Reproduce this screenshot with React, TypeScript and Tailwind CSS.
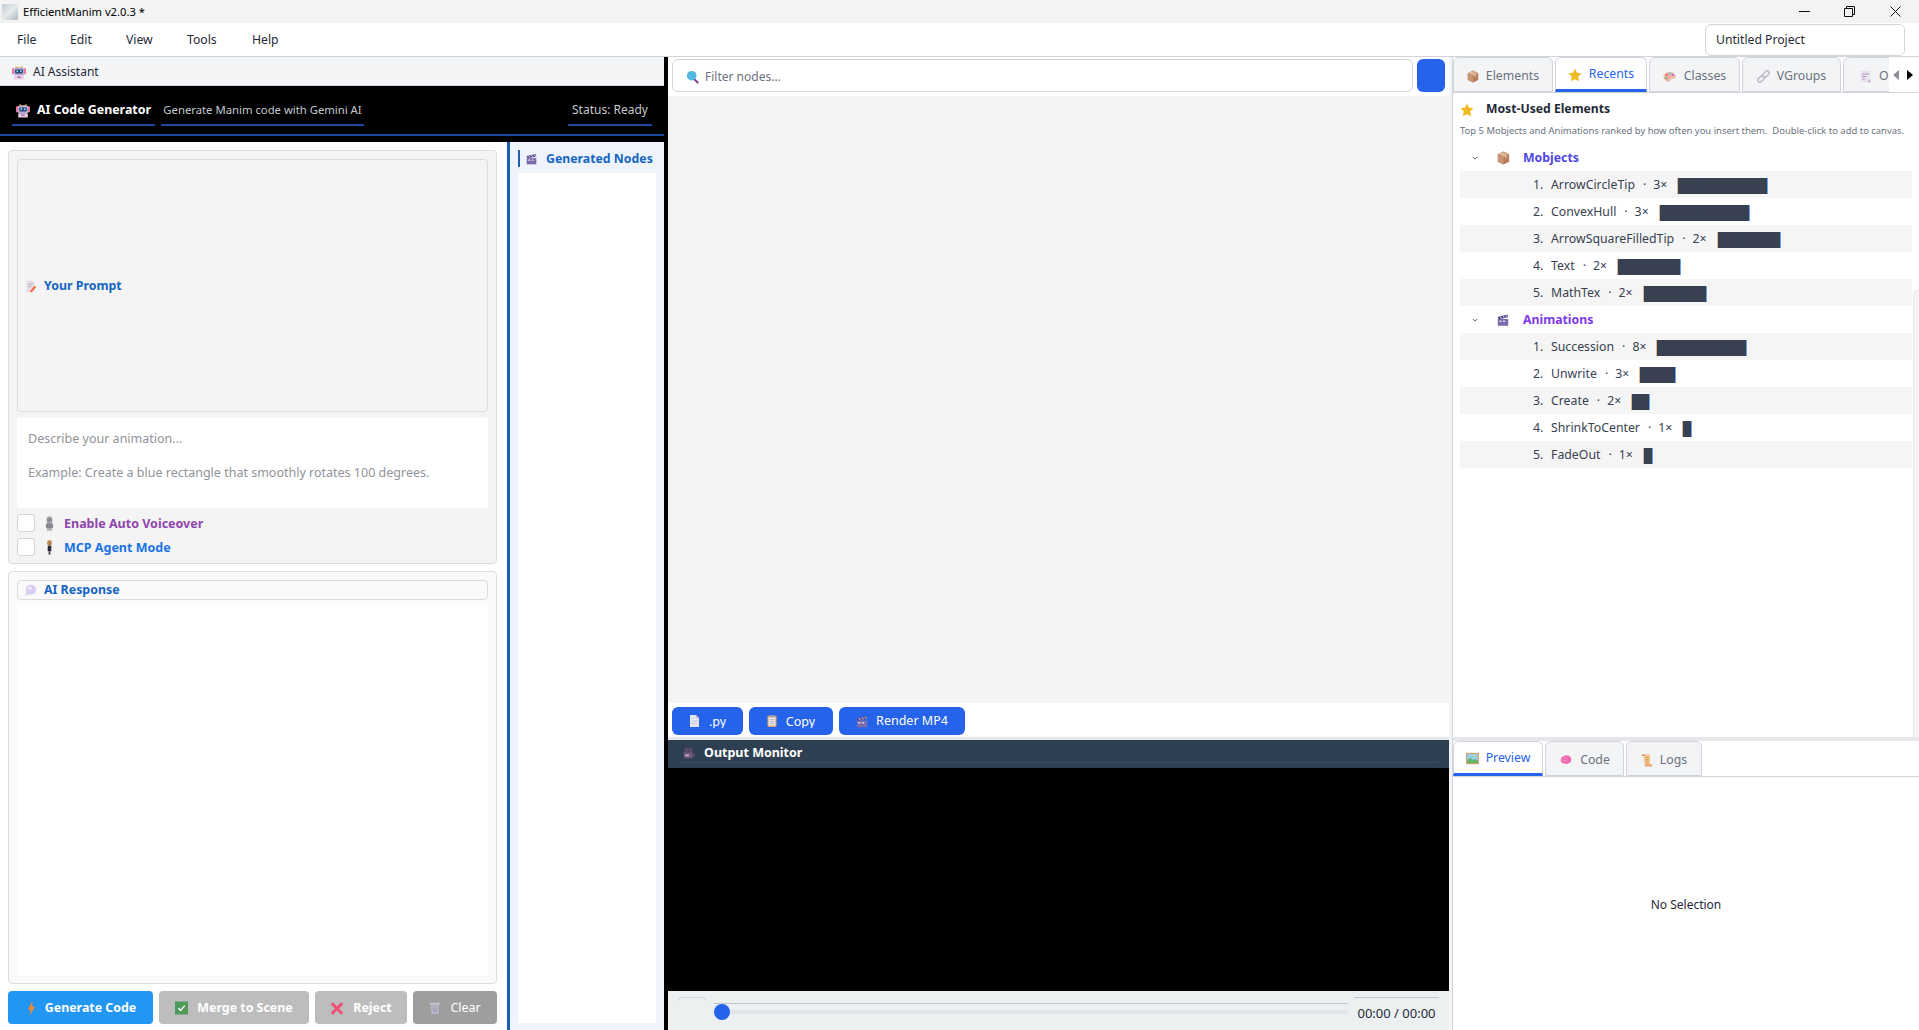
import React from "react";

type IconProps = { className?: string };

// emoji-like icons, the reference shows Windows emoji here
const Robot = ({ className }: IconProps) => (
  <svg viewBox="0 0 16 16" className={className}>
    <rect x="0" y="3" width="3" height="7" rx="1" fill="#ef6f95" />
    <rect x="13" y="3" width="3" height="7" rx="1" fill="#ef6f95" />
    <path d="M4 0l2 2h4l2-2v3H4z" fill="#e8b23a" />
    <rect x="2" y="2.500" width="12" height="8.500" rx="1.500" fill="#b5aee0" />
    <rect x="3.500" y="4.500" width="9" height="4.500" rx="1.500" fill="#2c3a66" />
    <rect x="5" y="5.500" width="2" height="2.200" fill="#7ad6f7" />
    <rect x="9" y="5.500" width="2" height="2.200" fill="#7ad6f7" />
    <rect x="2.500" y="11" width="11" height="5" rx="1" fill="#efcbe2" />
    <rect x="6" y="12.500" width="4" height="1.500" fill="#7a6ea8" />
  </svg>
);
const Memo = ({ className }: IconProps) => (
  <svg viewBox="0 0 16 16" className={className}>
    <path d="M3 1h7l3 3v11H3z" fill="#e6dce6" />
    <path d="M5 5h6M5 8h4" stroke="#b9a7b9" strokeWidth="1" />
    <path d="M7 14l6-7 2 2-6 6z" fill="#f4683c" />
  </svg>
);
const Clapper = ({ className }: IconProps) => (
  <svg viewBox="0 0 16 16" className={className}>
    <rect x="1" y="6" width="14" height="9" fill="#7c6bab" />
    <path d="M1 3l13-3 1 3.500L2 6.500z" fill="#5b4d8c" />
    <path d="M4 2.500l2 3M8 1.500l2 3M12 .8l2 3" stroke="#d8d2ee" strokeWidth="1.2" />
    <rect x="3" y="8" width="3" height="2" fill="#d8d2ee" />
    <rect x="8" y="8" width="3" height="2" fill="#d8d2ee" />
  </svg>
);
const Balloon = ({ className }: IconProps) => (
  <svg viewBox="0 0 16 16" className={className}>
    <ellipse cx="8.500" cy="7" rx="6.500" ry="6" fill="#d9cdf2" />
    <path d="M3 10l-2 5 5-2.500z" fill="#d9cdf2" />
    <ellipse cx="7" cy="5" rx="3" ry="2" fill="#efe9fb" />
  </svg>
);
const StudioMic = ({ className }: IconProps) => (
  <svg viewBox="0 0 10 16" className={className}>
    <rect x="2" y="0" width="6" height="9" rx="3" fill="#a7a2ac" />
    <path d="M2 3h6M2 5h6" stroke="#74707c" strokeWidth=".8" />
    <rect x="1" y="8" width="8" height="5" rx="1" fill="#8a858f" />
    <rect x="2" y="13" width="6" height="3" fill="#b5b1ba" />
  </svg>
);
const Mic = ({ className }: IconProps) => (
  <svg viewBox="0 0 10 16" className={className}>
    <rect x="2.500" y="0" width="5" height="6" rx="2" fill="#b9864e" />
    <rect x="3" y="6" width="4" height="6" fill="#2f2a3a" />
    <rect x="4" y="12" width="2" height="4" fill="#4a4556" />
  </svg>
);
const Bolt = ({ className }: IconProps) => (
  <svg viewBox="0 0 10 16" className={className}>
    <path d="M6 0L1 9h3l-1 7 6-10H6z" fill="#f28a30" />
  </svg>
);
const CheckBox = ({ className }: IconProps) => (
  <svg viewBox="0 0 16 16" className={className}>
    <rect width="16" height="16" fill="#4f9a5b" />
    <path d="M4 8l3 3 5-6" stroke="#fff" strokeWidth="1.6" fill="none" />
  </svg>
);
const Cross = ({ className }: IconProps) => (
  <svg viewBox="0 0 16 16" className={className}>
    <path d="M2 2l12 12M14 2L2 14" stroke="#ef4f72" strokeWidth="3.4" />
  </svg>
);
const Trash = ({ className }: IconProps) => (
  <svg viewBox="0 0 16 16" className={className}>
    <rect x="1" y="1" width="14" height="2" fill="#c9c5d6" />
    <path d="M2.500 3h11l-1 13h-9z" fill="#bdb8cc" />
    <path d="M5 5l1 9M8 5v9M11 5l-1 9" stroke="#8f8aa0" strokeWidth=".8" />
  </svg>
);
const Magnifier = ({ className }: IconProps) => (
  <svg viewBox="0 0 16 16" className={className}>
    <path d="M9 10l5 5" stroke="#7a3f95" strokeWidth="2.4" />
    <circle cx="6.500" cy="6.500" r="5.500" fill="#4fb9df" />
  </svg>
);
const Box = ({ className }: IconProps) => (
  <svg viewBox="0 0 16 16" className={className}>
    <path d="M8 0l7 3.500v9L8 16l-7-3.500v-9z" fill="#b97f5b" />
    <path d="M8 0l7 3.500L8 7 1 3.500z" fill="#d5a685" />
    <path d="M8 7v9L1 12.500v-9z" fill="#c89673" />
    <path d="M4 1.800l7 3.500v3" stroke="#eed4bd" strokeWidth="1.2" fill="none" />
  </svg>
);
const Star = ({ className }: IconProps) => (
  <svg viewBox="0 0 16 16" className={className}>
    <path d="M8 .5l2.300 4.900 5.200.7-3.800 3.700 1 5.400L8 12.800l-4.700 2.400 1-5.400L.5 6.100l5.200-.7z" fill="#efb91f" />
  </svg>
);
const Palette = ({ className }: IconProps) => (
  <svg viewBox="0 0 16 16" className={className}>
    <path d="M8 2C3.500 2 0 5 0 8.500S3.500 14 7 14c2 0 1-2 2-3s5 1 6-2-3-7-7-7z" fill="#f3b5a6" />
    <circle cx="4" cy="6" r="1.300" fill="#ef5b6d" />
    <circle cx="8" cy="4.500" r="1.300" fill="#5bc4e8" />
    <circle cx="3.500" cy="10" r="1.300" fill="#5cb85c" />
    <circle cx="11.500" cy="6" r="1.300" fill="#b06fd8" />
  </svg>
);
const Link = ({ className }: IconProps) => (
  <svg viewBox="0 0 16 16" className={className}>
    <g fill="none" stroke="#c3bccb" strokeWidth="2">
      <rect x="8.500" y="0.500" width="5" height="9" rx="2.500" transform="rotate(45 11 5)" />
      <rect x="2.500" y="6.500" width="5" height="9" rx="2.500" transform="rotate(45 5 11)" />
    </g>
  </svg>
);
const Page = ({ className }: IconProps) => (
  <svg viewBox="0 0 16 16" className={className}>
    <rect x="2" y="1" width="12" height="14" fill="#e9e1ee" />
    <path d="M4 5h8M4 8h5M4 11h3" stroke="#a894b5" strokeWidth="1.2" />
    <path d="M10 15l4-4v4z" fill="#c9a8d9" />
  </svg>
);
const FileIcon = ({ className }: IconProps) => (
  <svg viewBox="0 0 12 16" className={className}>
    <path d="M0 0h8l4 4v12H0z" fill="#e5e3ee" />
    <path d="M8 0l4 4H8z" fill="#b9b5c9" />
    <path d="M2 8h8M2 11h8" stroke="#c4c0d2" strokeWidth="1" />
  </svg>
);
const Clipboard = ({ className }: IconProps) => (
  <svg viewBox="0 0 12 16" className={className}>
    <rect y="1" width="12" height="15" rx="1" fill="#d9a679" />
    <rect x="1.500" y="3" width="9" height="11" fill="#ece9ee" />
    <rect x="3" y="0" width="6" height="3" fill="#9c9aa8" />
    <path d="M3 6h6M3 8.500h6M3 11h6" stroke="#a5a3b0" strokeWidth="1" />
  </svg>
);
const MovieCamera = ({ className }: IconProps) => (
  <svg viewBox="0 0 16 16" className={className}>
    <circle cx="4.500" cy="4" r="3" fill="#5b4a68" />
    <circle cx="10" cy="4" r="3" fill="#5b4a68" />
    <rect x="1" y="7" width="12" height="8" rx="1" fill="#6d5a78" />
    <path d="M13 9l3-1.500v6L13 12z" fill="#5b4a68" />
    <rect x="3" y="10" width="5" height="2.500" fill="#c9a9c9" />
  </svg>
);
const Picture = ({ className }: IconProps) => (
  <svg viewBox="0 0 16 16" className={className}>
    <rect y="1" width="16" height="14" fill="#d2a070" />
    <rect x="1.500" y="2.500" width="13" height="11" fill="#8fd0ef" />
    <path d="M1.500 13.500V10l4-3 4 3 2-1.500 3 2v3z" fill="#63b867" />
    <circle cx="10" cy="5" r="1.300" fill="#f7d54e" />
  </svg>
);
const Brain = ({ className }: IconProps) => (
  <svg viewBox="0 0 16 16" className={className}>
    <path d="M5 2.500C9 .8 14.500 2 15 7c.4 4-3 6-5 5.500-1 1.200-3 1-4 0-3 .4-5.500-1.500-5-5 .3-2.500 2-4 4-5z" fill="#f06bb0" />
    <path d="M5 5c2-1 3 0 4 1M4 9c2-1 3 1 5 0" stroke="#f9a5d0" strokeWidth="1" fill="none" />
  </svg>
);
const Scroll = ({ className }: IconProps) => (
  <svg viewBox="0 0 16 16" className={className}>
    <path d="M3 0h9v14H5z" fill="#f6c48c" />
    <rect x="1" y="0" width="4" height="2" fill="#e58e50" />
    <rect x="5" y="13" width="10" height="3" fill="#eba666" />
    <path d="M6 4h4M6 7h4M6 10h4" stroke="#c98645" strokeWidth="1" />
  </svg>
);

const mobjects = [
  { name: "ArrowCircleTip", count: 3, bar: 91 },
  { name: "ConvexHull", count: 3, bar: 91 },
  { name: "ArrowSquareFilledTip", count: 2, bar: 64 },
  { name: "Text", count: 2, bar: 64 },
  { name: "MathTex", count: 2, bar: 64 },
];
const animations = [
  { name: "Succession", count: 8, bar: 91 },
  { name: "Unwrite", count: 3, bar: 37 },
  { name: "Create", count: 2, bar: 19 },
  { name: "ShrinkToCenter", count: 1, bar: 10 },
  { name: "FadeOut", count: 1, bar: 10 },
];

function RankRow({ i, name, count, bar }: { i: number; name: string; count: number; bar: number }) {
  return (
    <div className={`h-[27px] flex items-center pt-[2px] pl-[73px] text-[12.3px] text-[#374151] ${i % 2 === 0 ? "bg-[#f5f5f5]" : ""}`}>
      <span className="w-[18px]">{i + 1}.</span>
      <span>{name}</span>
      <span className="ml-[8px]">·</span>
      <span className="ml-[7px]">{count}×</span>
      <span
        className="ml-[10px] h-[16px] bg-[repeating-linear-gradient(90deg,#374151_0,#374151_8px,#423f4e_8px,#423f4e_9px)] border-l border-r border-l-[#e8b98c] border-r-[#60a5fa]"
        style={{ width: bar }}
      />
    </div>
  );
}

function TreeHeader({ icon, label, color }: { icon: React.ReactNode; label: string; color: string }) {
  return (
    <div className="h-[27px] flex items-center pt-[1px]">
      <svg viewBox="0 0 8 5" className="ml-[12px] w-[6px] h-[4px]">
        <path d="M1 1l3 3 3-3" stroke="#475569" fill="none" strokeWidth="1.2" />
      </svg>
      <span className="ml-[19px] w-[26px]">{icon}</span>
      <span className={`text-[12.3px] font-bold ${color}`}>{label}</span>
    </div>
  );
}

function Tab({ icon, label, active, className }: { icon: React.ReactNode; label: string; active?: boolean; className: string }) {
  return (
    <div
      className={`shrink-0 flex items-center justify-center gap-[7px] border border-[#d1d5db] rounded-t-[6px] text-[12.3px] ${className} ${
        active ? "bg-white text-[#2563eb] border-b-[3px] border-b-[#2563eb] pt-[2px]" : "bg-[#f3f4f6] text-[#6b7280] pt-[3px]"
      }`}
    >
      {icon}
      <span>{label}</span>
    </div>
  );
}

function ActionButton({ children, className }: { children: React.ReactNode; className: string }) {
  return (
    <button className={`h-[33px] flex items-center justify-center gap-[9px] rounded-[4px] text-[12.4px] text-white pt-[1px] ${className}`}>
      {children}
    </button>
  );
}

export default function App() {
  return (
    <div className="h-[1030px] w-full flex flex-col overflow-hidden bg-white font-['Noto_Sans',sans-serif] text-[12px] text-[#1f2937]">
      {/* title bar */}
      <div className="h-[23px] shrink-0 flex items-center bg-[#f3f3f3]">
        <div className="ml-[2px] w-[16px] h-[16px] bg-[linear-gradient(135deg,#c4ccd2,#e6eaec,#aab8c2)]" />
        <span className="ml-[5px] pt-[1px] text-[11.2px] text-black">EfficientManim v2.0.3 *</span>
        <div className="ml-auto flex items-center">
          <svg viewBox="0 0 11 11" className="w-[11px] h-[11px]">
            <path d="M0 5.500h11" stroke="#111" />
          </svg>
          <svg viewBox="0 0 11 11" className="ml-[34px] w-[11px] h-[11px]">
            <path d="M.5 2.500h8v8h-8zM2.500 2.500v-2h8v8h-2" stroke="#111" fill="none" />
          </svg>
          <svg viewBox="0 0 11 11" className="ml-[35px] mr-[18px] w-[11px] h-[11px]">
            <path d="M.5.500l10 10M10.500.500l-10 10" stroke="#111" />
          </svg>
        </div>
      </div>

      {/* menu bar */}
      <div className="h-[34px] shrink-0 flex items-center border-b border-[#d1d5db] bg-white pl-[17px] pr-[14px] text-[12.2px] text-[#1f2937]">
        <span className="w-[53px] pt-[1px]">File</span>
        <span className="w-[56px] pt-[1px]">Edit</span>
        <span className="w-[61px] pt-[1px]">View</span>
        <span className="w-[65px] pt-[1px]">Tools</span>
        <span className="pt-[1px]">Help</span>
        <div className="ml-auto w-[200px] h-[32px] flex items-center pl-[10px] pt-[2px] border border-[#d1d5db] rounded-[6px]">
          Untitled Project
        </div>
      </div>

      <div className="flex-1 flex min-h-0">
        {/* AI dock */}
        <div className="w-[664px] shrink-0 flex flex-col">
          <div className="h-[29px] shrink-0 flex items-center pl-[12px] pt-[2px] gap-[7px] bg-[#f3f4f6] border-b border-[#d1d5db]">
            <Robot className="w-[14px] h-[15px]" />
            <span>AI Assistant</span>
          </div>
          <div className="h-[56px] shrink-0 bg-black">
            <div className="h-[50px] flex items-end border-b-2 border-[#1a4a9f] px-[12px] pb-[8px]">
              <div className="h-[30px] w-[143px] flex items-center justify-center gap-[7px] border-b-2 border-[#1a4a9f] text-[12.4px] text-white font-bold">
                <Robot className="w-[14px] h-[15px]" />
                <span>AI Code Generator</span>
              </div>
              <div className="ml-[6px] h-[30px] w-[203px] flex items-center justify-center border-b-2 border-[#1a4a9f] text-[#c4c8ce] text-[11.3px]">
                Generate Manim code with Gemini AI
              </div>
              <div className="ml-auto h-[30px] w-[84px] flex items-center justify-center border-b-2 border-[#1a4a9f] text-[#c4c8ce]">
                Status: Ready
              </div>
            </div>
          </div>
          <div className="flex-1 min-h-0 flex">
            {/* prompt and response */}
            <div className="w-[507px] shrink-0 flex flex-col pt-[8px] pl-[8px] pr-[10px] pb-[6px]">
              <div className="h-[414px] shrink-0 flex flex-col bg-[#f4f4f4] border border-[#dddddd] rounded-[4px] px-[8px] pt-[8px]">
                <div className="h-[253px] shrink-0 flex items-center pl-[6px] pt-[2px] gap-[7px] border border-[#dcdcdc] rounded-[4px] text-[12.4px] font-bold text-[#1565c0]">
                  <Memo className="w-[13px] h-[15px]" />
                  <span>Your Prompt</span>
                </div>
                <textarea
                  className="mt-[6px] h-[90px] shrink-0 resize-none bg-white pl-[11px] pt-[12px] text-[12.5px] leading-[17px] outline-none placeholder:text-[#8f949b]"
                  placeholder={"Describe your animation...\n\nExample: Create a blue rectangle that smoothly rotates 100 degrees."}
                />
                <div className="mt-[6px] h-[18px] flex items-center">
                  <div className="w-[18px] h-[18px] bg-white border border-[#d1d5db] rounded-[3px]" />
                  <StudioMic className="ml-[10px] w-[9px] h-[15px]" />
                  <span className="ml-[10px] pt-[3px] text-[12.5px] font-bold text-[#8e44ad]">Enable Auto Voiceover</span>
                </div>
                <div className="mt-[6px] h-[18px] flex items-center">
                  <div className="w-[18px] h-[18px] bg-white border border-[#d1d5db] rounded-[3px]" />
                  <Mic className="ml-[10px] w-[9px] h-[15px]" />
                  <span className="ml-[10px] pt-[3px] text-[12.5px] font-bold text-[#1a73e8]">MCP Agent Mode</span>
                </div>
              </div>
              <div className="mt-[7px] h-[413px] shrink-0 flex flex-col bg-[#fafafa] border border-[#dddddd] rounded-[4px] px-[8px] pt-[8px] pb-[7px]">
                <div className="h-[20px] shrink-0 flex items-center pl-[6px] gap-[7px] border border-[#dcdcdc] rounded-[4px] text-[12.4px] font-bold text-[#1565c0]">
                  <Balloon className="w-[13px] h-[13px]" />
                  <span>AI Response</span>
                </div>
                <div className="mt-[5px] flex-1 bg-white" />
              </div>
              <div className="mt-[7px] flex gap-[6px] font-bold">
                <ActionButton className="w-[145px] bg-[#2196f3] font-bold pl-[2px]">
                  <Bolt className="w-[9px] h-[15px]" />
                  <span>Generate Code</span>
                </ActionButton>
                <ActionButton className="w-[150px] bg-[#bdbdbd] font-bold">
                  <CheckBox className="w-[13px] h-[14px]" />
                  <span>Merge to Scene</span>
                </ActionButton>
                <ActionButton className="w-[92px] bg-[#bdbdbd] font-bold">
                  <Cross className="w-[14px] h-[15px]" />
                  <span>Reject</span>
                </ActionButton>
                <ActionButton className="w-[84px] bg-[#9e9e9e] font-normal">
                  <Trash className="w-[12px] h-[14px]" />
                  <span>Clear</span>
                </ActionButton>
              </div>
            </div>
            {/* generated nodes */}
            <div className="flex-1 flex flex-col border-l-[3px] border-[#1a5fb4] bg-[#eef3fc] pl-[8px] pr-[8px] pt-[8px] pb-[7px]">
              <div className="h-[17px] shrink-0 flex items-center border-l-2 border-[#1a5fb4] pl-[6px] pt-[2px] gap-[9px] text-[12.3px] font-bold text-[#1565c0]">
                <Clapper className="w-[11px] h-[13px]" />
                <span>Generated Nodes</span>
              </div>
              <div className="mt-[6px] flex-1 bg-white" />
            </div>
          </div>
        </div>

        <div className="w-[4px] shrink-0 bg-black" />

        {/* node canvas and output */}
        <div className="w-[781px] shrink-0 flex flex-col">
          <div className="h-[39px] shrink-0 flex pl-[4px] pr-[4px] pt-[2px] pb-[4px] gap-[4px]">
            <div className="flex-1 flex items-center pl-[13px] pt-[2px] gap-[5px] border border-[#d1d5db] rounded-[6px] text-[#6b7280]">
              <Magnifier className="w-[14px] h-[14px]" />
              <span>Filter nodes...</span>
            </div>
            <div className="w-[28px] bg-[#2563eb] rounded-[6px]" />
          </div>
          <div className="flex-1 bg-[#f3f4f6]" />
          <div className="h-[34px] shrink-0 flex pl-[4px] pt-[4px] gap-[6px] text-[12.5px]">
            <button className="w-[71px] h-[28px] flex items-center justify-center gap-[9px] bg-[#2563eb] rounded-[6px] text-white">
              <FileIcon className="w-[11px] h-[12px]" />
              <span className="block h-[14px] leading-[15px] overflow-hidden">.py</span>
            </button>
            <button className="w-[84px] h-[28px] flex items-center justify-center gap-[9px] bg-[#2563eb] rounded-[6px] text-white">
              <Clipboard className="w-[10px] h-[12px]" />
              <span className="block h-[14px] leading-[15px] overflow-hidden">Copy</span>
            </button>
            <button className="w-[126px] h-[28px] flex items-center justify-center gap-[8px] bg-[#2563eb] rounded-[6px] text-white pt-[1px]">
              <Clapper className="w-[12px] h-[12px]" />
              <span>Render MP4</span>
            </button>
          </div>
          <div className="h-[3px] shrink-0 bg-[#e5e7eb]" />
          <div className="h-[28px] shrink-0 pl-[10px] pr-[10px] pt-[1px] bg-[#2f3f52] text-[12.5px] text-white font-bold">
            <div className="h-[22px] flex items-center pl-[5px] pt-[3px] gap-[9px] border-b border-[#3b4d61]">
              <MovieCamera className="w-[12px] h-[12px]" />
              <span>Output Monitor</span>
            </div>
          </div>
          <div className="h-[223px] shrink-0 bg-black" />
          <div className="h-[39px] shrink-0 flex bg-[#ecf0f1] pl-[10px] pr-[10px] pt-[6px]">
            <div className="w-[28px] h-[4px] border-t border-x border-[#d5d9dc] rounded-t-[4px]" />
            <div className="ml-[8px] w-[634px] relative h-[24px] mt-[6px] border-t border-[#c0c5c8]">
              <div className="mt-[6px] h-[4px] bg-[#e3e6e8]" />
              <div className="absolute left-0 top-0 w-[16px] h-[16px] rounded-full bg-[#2563eb]" />
            </div>
            <div className="ml-[6px] w-[85px] h-[24px] border-t border-[#c0c5c8] pt-[6px] text-center text-[13px] text-[#1f2937]">
              00:00 / 00:00
            </div>
          </div>
        </div>

        <div className="w-[3px] shrink-0 bg-[#f3f4f6]" />

        {/* right side tabs */}
        <div className="flex-1 min-w-0 flex flex-col border-l border-[#d1d5db]">
          <div className="h-[36px] shrink-0 relative flex gap-[2px] border-b border-[#d1d5db] overflow-hidden">
            <Tab icon={<Box className="w-[12px] h-[13px]" />} label="Elements" className="w-[100px]" />
            <Tab icon={<Star className="w-[14px] h-[14px]" />} label="Recents" active className="w-[92px]" />
            <Tab icon={<Palette className="w-[14px] h-[13px]" />} label="Classes" className="w-[91px]" />
            <Tab icon={<Link className="w-[13px] h-[13px]" />} label="VGroups" className="w-[99px]" />
            <Tab icon={<Page className="w-[13px] h-[13px]" />} label="Outliner" className="w-[90px] !justify-start pl-[15px]" />
            <div className="absolute right-0 top-0 w-[30px] h-[35px] flex items-center bg-white pl-[4px] gap-[8px]">
              <svg viewBox="0 0 6 10" className="w-[6px] h-[10px]"><path d="M6 0v10L0 5z" fill="#8a8f96" /></svg>
              <svg viewBox="0 0 6 10" className="w-[6px] h-[10px]"><path d="M0 0v10l6-5z" fill="#000" /></svg>
            </div>
          </div>
          <div className="h-[644px] shrink-0 relative pl-[7px] pr-[7px]">
            <div className="h-[31px] flex items-center pt-[2px]">
              <Star className="w-[14px] h-[14px]" />
              <span className="ml-[12px] font-bold text-[12.2px] text-[#1f2937]">Most-Used Elements</span>
            </div>
            <div className="h-[19px] flex items-center pb-[5px] whitespace-pre text-[9.45px] text-[#6b7280]">
              {"Top 5 Mobjects and Animations ranked by how often you insert them.  Double-click to add to canvas."}
            </div>
            <div className="mt-[1px]">
              <TreeHeader icon={<Box className="w-[13px] h-[14px]" />} label="Mobjects" color="text-[#4f46e5]" />
              {mobjects.map((m, i) => (
                <RankRow key={m.name} i={i} {...m} />
              ))}
              <TreeHeader icon={<Clapper className="w-[12px] h-[13px]" />} label="Animations" color="text-[#7c3aed]" />
              {animations.map((m, i) => (
                <RankRow key={m.name} i={i} {...m} />
              ))}
            </div>
            <div className="absolute right-0 top-[196px] bottom-0 w-[6px] bg-[#f3f4f6] border-l border-t border-[#e5e7eb] rounded-tl-[6px]" />
          </div>
          <div className="h-[4px] shrink-0 bg-[#e5e7eb]" />
          <div className="h-[36px] shrink-0 flex gap-[2px] border-b border-[#d1d5db]">
            <Tab icon={<Picture className="w-[13px] h-[13px]" />} label="Preview" active className="w-[90px]" />
            <Tab icon={<Brain className="w-[14px] h-[12px]" />} label="Code" className="w-[79px]" />
            <Tab icon={<Scroll className="w-[12px] h-[13px]" />} label="Logs" className="w-[76px]" />
          </div>
          <div className="flex-1 flex items-center justify-center pt-[3px] text-[#1f2937]">No Selection</div>
        </div>
      </div>
    </div>
  );
}
